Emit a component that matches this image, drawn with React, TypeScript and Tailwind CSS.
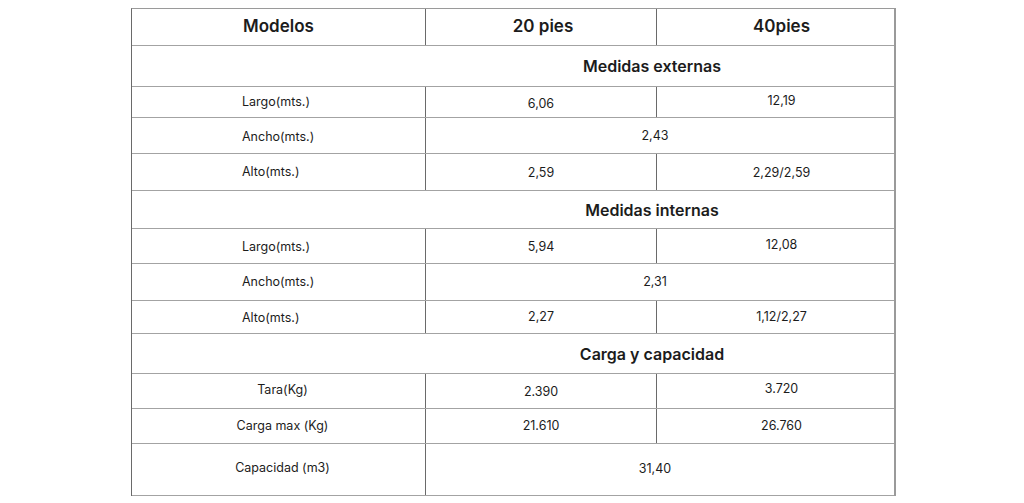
const font = "font-['Inter','Open_Sans',sans-serif]";

type Row =
  | { kind: "section"; title: string; h: string }
  | {
      kind: "data";
      label: string;
      left?: boolean;
      a: string;
      b?: string;
      h: string;
      labelCls?: string;
      aCls?: string;
      bCls?: string;
    };

const rows: Row[] = [
  { kind: "section", title: "Medidas externas", h: "h-[41px]" },
  { kind: "data", label: "Largo(mts.)", left: true, a: "6,06", b: "12,19", h: "h-[31px]", aCls: "pt-[5px]", bCls: "pb-[2px]" },
  { kind: "data", label: "Ancho(mts.)", left: true, a: "2,43", h: "h-[36px]", labelCls: "pt-[4px]", aCls: "pt-[2px]" },
  { kind: "data", label: "Alto(mts.)", left: true, a: "2,59", b: "2,29/2,59", h: "h-[37px]", aCls: "pt-[3px]", bCls: "pt-[3px]" },
  { kind: "section", title: "Medidas internas", h: "h-[38px]" },
  { kind: "data", label: "Largo(mts.)", left: true, a: "5,94", b: "12,08", h: "h-[35px]", labelCls: "pt-[2px]", aCls: "pt-[3px]", bCls: "pb-[2px]" },
  { kind: "data", label: "Ancho(mts.)", left: true, a: "2,31", h: "h-[37px]" },
  { kind: "data", label: "Alto(mts.)", left: true, a: "2,27", b: "1,12/2,27", h: "h-[33px]", labelCls: "pt-[2px]" },
  { kind: "section", title: "Carga y capacidad", h: "h-[40px]" },
  { kind: "data", label: "Tara(Kg)", a: "2.390", b: "3.720", h: "h-[35px]", labelCls: "pb-[2px]", aCls: "pt-[3px]", bCls: "pb-[4px]" },
  { kind: "data", label: "Carga max (Kg)", a: "21.610", b: "26.760", h: "h-[35px]" },
  { kind: "data", label: "Capacidad (m3)", a: "31,40", h: "h-[52px]", labelCls: "pb-[2px]" },
];

export default function App() {
  return (
    <div className={`w-[1024px] h-[503px] bg-white pt-[8px] pl-[131px] ${font} text-[#1c1c1c]`}>
      <div className="w-[765px] border-t border-x border-t-[#9a9a9a] border-l-[#6a6a6a] border-r-[#9a9a9a] border-r-2">
        {/* header */}
        <div className="flex h-[37px] border-b border-[#a3a3a3] text-[17px] font-semibold">
          <div className="w-[294px] flex items-center justify-center border-r border-[#6a6a6a]">Modelos</div>
          <div className="w-[231px] flex items-center justify-center pl-[4px] border-r border-[#6a6a6a]">20 pies</div>
          <div className="flex-1 flex items-center justify-center pl-[12px]">40pies</div>
        </div>

        {rows.map((r, i) =>
          r.kind === "section" ? (
            <div
              key={i}
              className={`${r.h} flex items-center justify-center pl-[278px] border-b border-[#a3a3a3] text-[16px] font-semibold`}
            >
              {r.title}
            </div>
          ) : (
            <div key={i} className={`${r.h} flex border-b border-[#a3a3a3] text-[12.5px]`}>
              <div
                className={`w-[294px] flex items-center border-r border-[#6a6a6a] ${
                  r.left ? "pl-[110px]" : "justify-center pl-[8px]"
                } ${r.labelCls ?? ""}`}
              >
                {r.label}
              </div>
              {r.b ? (
                <>
                  <div className={`w-[231px] flex items-center justify-center border-r border-[#6a6a6a] ${r.aCls ?? ""}`}>
                    {r.a}
                  </div>
                  <div className={`flex-1 flex items-center justify-center pl-[12px] ${r.bCls ?? ""}`}>{r.b}</div>
                </>
              ) : (
                <div className={`flex-1 flex items-center justify-center pr-[10px] ${r.aCls ?? ""}`}>{r.a}</div>
              )}
            </div>
          )
        )}
      </div>
    </div>
  );
}
